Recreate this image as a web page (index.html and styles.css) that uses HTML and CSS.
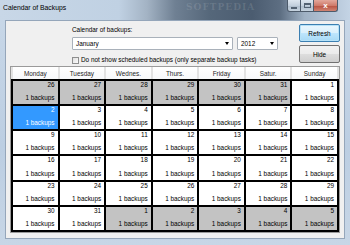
FILE: index.html
```html
<!DOCTYPE html>
<html lang="en">
<head>
    <meta charset="UTF-8">
    <title>Calendar of Backups</title>
    <link rel="stylesheet" href="styles.css">
</head>
<body>
    <div class="window">
        <div class="titlebar">
            <span class="title">Calendar of Backups</span>
            <span class="watermark">SOFTPEDIA</span>
            <div class="caption">
                <span class="cap-btn cap-min"><i></i></span>
                <span class="cap-btn cap-max"><i></i></span>
                <span class="cap-btn cap-close">x</span>
            </div>
        </div>

        <div class="client">
            <div class="top">
                <div class="form">
                    <div class="label">Calendar of backups:</div>
                    <div class="selects">
                        <div class="combo combo-month">January<b></b></div>
                        <div class="combo combo-year">2012<b></b></div>
                    </div>
                    <label class="check"><span class="box"></span>Do not show scheduled backups (only separate backup tasks)</label>
                </div>
                <div class="actions">
                    <button class="btn btn-default">Refresh</button>
                    <button class="btn">Hide</button>
                </div>
            </div>

            <div class="calendar">
                <div class="head">
                    <div>Monday</div>
                    <div>Tuesday</div>
                    <div>Wednes.</div>
                    <div>Thurs.</div>
                    <div>Friday</div>
                    <div>Satur.</div>
                    <div>Sunday</div>
                </div>
                <div class="grid">
                    <div class="day other"><span>26</span><span>1 backups</span></div>
                    <div class="day other"><span>27</span><span>1 backups</span></div>
                    <div class="day other"><span>28</span><span>1 backups</span></div>
                    <div class="day other"><span>29</span><span>1 backups</span></div>
                    <div class="day other"><span>30</span><span>1 backups</span></div>
                    <div class="day other"><span>31</span><span>1 backups</span></div>
                    <div class="day"><span>1</span><span>1 backups</span></div>

                    <div class="day selected"><span>2</span><span>1 backups</span></div>
                    <div class="day"><span>3</span><span>1 backups</span></div>
                    <div class="day"><span>4</span><span>1 backups</span></div>
                    <div class="day"><span>5</span><span>1 backups</span></div>
                    <div class="day"><span>6</span><span>1 backups</span></div>
                    <div class="day"><span>7</span><span>1 backups</span></div>
                    <div class="day"><span>8</span><span>1 backups</span></div>

                    <div class="day"><span>9</span><span>1 backups</span></div>
                    <div class="day"><span>10</span><span>1 backups</span></div>
                    <div class="day"><span>11</span><span>1 backups</span></div>
                    <div class="day"><span>12</span><span>1 backups</span></div>
                    <div class="day"><span>13</span><span>1 backups</span></div>
                    <div class="day"><span>14</span><span>1 backups</span></div>
                    <div class="day"><span>15</span><span>1 backups</span></div>

                    <div class="day"><span>16</span><span>1 backups</span></div>
                    <div class="day"><span>17</span><span>1 backups</span></div>
                    <div class="day"><span>18</span><span>1 backups</span></div>
                    <div class="day"><span>19</span><span>1 backups</span></div>
                    <div class="day"><span>20</span><span>1 backups</span></div>
                    <div class="day"><span>21</span><span>1 backups</span></div>
                    <div class="day"><span>22</span><span>1 backups</span></div>

                    <div class="day"><span>23</span><span>1 backups</span></div>
                    <div class="day"><span>24</span><span>1 backups</span></div>
                    <div class="day"><span>25</span><span>1 backups</span></div>
                    <div class="day"><span>26</span><span>1 backups</span></div>
                    <div class="day"><span>27</span><span>1 backups</span></div>
                    <div class="day"><span>28</span><span>1 backups</span></div>
                    <div class="day"><span>29</span><span>1 backups</span></div>

                    <div class="day"><span>30</span><span>1 backups</span></div>
                    <div class="day"><span>31</span><span>1 backups</span></div>
                    <div class="day other"><span>1</span><span>1 backups</span></div>
                    <div class="day other"><span>2</span><span>1 backups</span></div>
                    <div class="day other"><span>3</span><span>1 backups</span></div>
                    <div class="day other"><span>4</span><span>1 backups</span></div>
                    <div class="day other"><span>5</span><span>1 backups</span></div>
                </div>
            </div>
        </div>
    </div>
</body>
</html>
```

FILE: styles.css
```css
* {
    margin: 0;
    padding: 0;
    box-sizing: border-box;
    font-family: "Liberation Sans", Arial, sans-serif;
}
body {
    width: 350px;
    height: 245px;
    overflow: hidden;
}
.window {
    width: 350px;
    height: 245px;
    display: flex;
    flex-direction: column;
    background: linear-gradient(180deg, #c9d8e8 0, #bccee2 60%, #c7d6e6 100%);
    padding: 0 5px 6px 5px;
}
.titlebar {
    height: 20px;
    margin: 0 -5px;
    padding-left: 3px;
    display: flex;
    align-items: flex-start;
    background: linear-gradient(90deg, #c8d7e7 0, #c0d1e3 34%, #a3b3c4 42%, #6f8093 50%, #55677a 60%, #4b5c70 72%, #5d6e82 80%, #9fb1c4 87%, #c4d4e5 100%);
}
.title {
    font-size: 6.8px;
    line-height: 16px;
    color: #000;
}
.watermark {
    margin-left: 120px;
    font-family: "DejaVu Serif", serif;
    font-weight: bold;
    font-size: 9px;
    line-height: 15px;
    letter-spacing: 1px;
    color: rgba(255, 255, 255, 0.12);
}
.caption {
    margin-left: auto;
    margin-right: 12px;
    display: flex;
}
.cap-btn {
    height: 12px;
    display: flex;
    align-items: center;
    justify-content: center;
    border: 1px solid #4d5b6b;
    border-top: none;
    background: linear-gradient(180deg, #dde6ef 0, #c3d0dd 50%, #aebdcc 51%, #c6d3df 100%);
}
.cap-min {
    width: 14px;
    border-radius: 0 0 0 3px;
}
.cap-min i {
    width: 6px;
    height: 2px;
    margin-top: 4px;
    background: #fff;
    border: 1px solid #536272;
}
.cap-max {
    width: 13px;
    border-left: none;
}
.cap-max i {
    width: 7px;
    height: 5px;
    border: 1px solid #536272;
    border-top-width: 2px;
    background: transparent;
}
.cap-close {
    width: 24px;
    border-left: none;
    border-radius: 0 0 3px 0;
    font-size: 8px;
    font-weight: bold;
    color: #fff;
    background: linear-gradient(180deg, #e3a79b 0, #cf7b6b 50%, #b8503f 51%, #d08474 100%);
}
.client {
    flex: 1;
    display: flex;
    flex-direction: column;
    background: #f0f0f0;
    border: 1px solid #95a6ba;
    padding: 0 4px 5px 4px;
}
.top {
    height: 45px;
    display: flex;
}
.form {
    margin-left: 62px;
    width: 206px;
    padding-top: 5px;
    font-size: 6.4px;
    color: #000;
}
.label {
    line-height: 8px;
}
.selects {
    display: flex;
    gap: 4px;
    margin-top: 3px;
}
.combo {
    height: 13px;
    display: flex;
    align-items: center;
    padding-left: 3px;
    background: #fff;
    border: 1px solid #a9b1ba;
    border-radius: 1px;
}
.combo b {
    margin-left: auto;
    margin-right: 3px;
    border-left: 2px solid transparent;
    border-right: 2px solid transparent;
    border-top: 3px solid #000;
}
.combo-month {
    width: 161px;
}
.combo-year {
    width: 41px;
}
.check {
    display: flex;
    align-items: center;
    margin-top: 6px;
    line-height: 8px;
}
.box {
    width: 7px;
    height: 7px;
    margin-right: 2px;
    border: 1px solid #8e8f8f;
    background: linear-gradient(135deg, #e0e0e0, #fbfbfb);
}
.actions {
    margin-left: auto;
    width: 41px;
    padding-top: 3px;
    display: flex;
    flex-direction: column;
    gap: 3px;
}
.btn {
    height: 18px;
    font-size: 6.4px;
    color: #000;
    border: 1px solid #707070;
    border-radius: 2px;
    background: linear-gradient(180deg, #f2f2f2 0, #ebebeb 50%, #dddddd 51%, #cfcfcf 100%);
}
.btn-default {
    border-color: #3c7fb1;
    box-shadow: inset 0 0 0 1px #b6e2f8;
    background: linear-gradient(180deg, #eaf6fd 0, #d9f0fc 50%, #bee6fd 51%, #a7d9f5 100%);
}
.calendar {
    flex: 1;
    display: flex;
    flex-direction: column;
    border: 1px solid #9a9a9a;
    background: #fff;
}
.head {
    height: 12px;
    display: grid;
    grid-template-columns: repeat(7, 1fr);
    gap: 2px;
    padding: 0 2px;
    background: #e2e2e2;
}
.head div {
    display: flex;
    align-items: center;
    justify-content: center;
    font-size: 6.4px;
    color: #1e1e1e;
    background: linear-gradient(180deg, #ffffff 0, #f7f8fa 100%);
}
.grid {
    flex: 1;
    display: grid;
    grid-template-columns: repeat(7, 1fr);
    grid-template-rows: repeat(6, 1fr);
    gap: 2px;
    padding: 2px;
    background: #000;
}
.day {
    display: flex;
    flex-direction: column;
    justify-content: space-between;
    align-items: flex-end;
    padding: 0 3px 2px 3px;
    background: #fff;
    font-size: 6.4px;
    line-height: 8px;
    color: #000;
}
.day.other {
    background: #c3c3c3;
}
.day.selected {
    background: #3399ff;
    color: #fff;
}
```
